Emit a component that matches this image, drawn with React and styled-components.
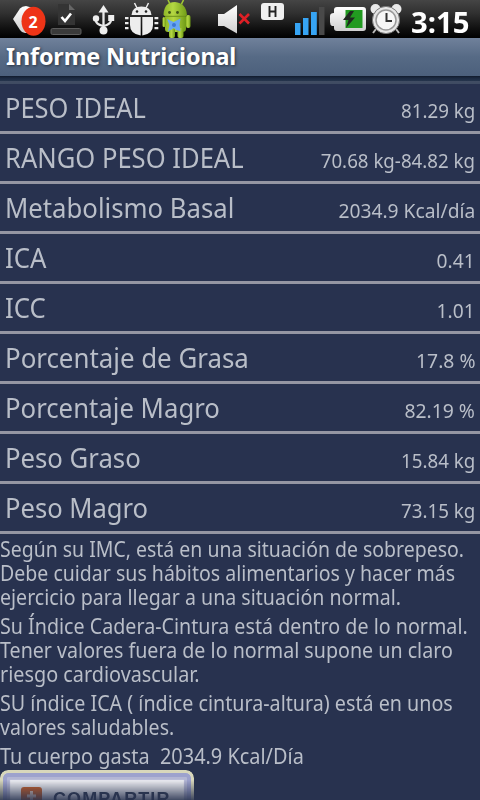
import React from 'react';
import styled, { createGlobalStyle } from 'styled-components';

const GlobalStyle = createGlobalStyle`
  * {
    box-sizing: border-box;
  }

  body {
    margin: 0;
    background: #28324f;
    font-family: 'Noto Sans', 'Open Sans', sans-serif;
    color: #b9bec8;
  }
`;

const Screen = styled.div`
  width: 480px;
  height: 800px;
  overflow: hidden;
  display: flex;
  flex-direction: column;
`;

const StatusBar = styled.header`
  height: 38px;
  flex: none;
  display: flex;
  background: linear-gradient(#454545 0, #303030 35%, #101010 75%, #000 100%);
`;

const StatusIcons = styled.svg`
  flex: none;
`;

const Clock = styled.time`
  height: 38px;
  line-height: 43px;
  font-size: 29px;
  font-weight: 700;
  transform: scaleX(1.01);
  transform-origin: left;
  color: #fff;
  white-space: nowrap;
`;

const TitleBar = styled.h1`
  height: 38px;
  flex: none;
  margin: 0;
  padding-left: 6px;
  line-height: 37px;
  font-size: 23.4px;
  font-weight: 700;
  letter-spacing: -0.15px;
  color: #fff;
  white-space: nowrap;
  text-shadow: 1px 1px 3px #26303f;
  background: linear-gradient(#70819b, #566a85 50%, #4c607c);
`;

const TitleShadow = styled.div`
  height: 8px;
  flex: none;
  background: linear-gradient(#111b2c 0, #1b2940 25%, #25344c 60%, #414d63 63%, #3f4b62 100%);
`;

const List = styled.ul`
  flex: none;
  margin: 0;
  padding: 0;
  list-style: none;
`;

const Row = styled.li`
  height: 50px;
  padding: 0 5px;
  display: flex;
  justify-content: space-between;
  border-bottom: 3px solid #9596a3;
  line-height: 47px;
  white-space: nowrap;
`;

const Label = styled.span`
  font-size: 27.5px;
  transform: scaleX(${props => props.$stretch});
  transform-origin: left;
`;

const Value = styled.span`
  padding-top: 3px;
  font-size: 20px;
  transform: scaleX(${props => props.$stretch});
  transform-origin: right;
`;

const Notes = styled.section`
  flex: none;
  padding-top: 3px;
  display: flex;
  flex-direction: column;
  gap: 5px;
`;

const Paragraph = styled.p`
  margin: 0;
  display: flex;
  flex-direction: column;
  align-items: flex-start;
  font-size: 21px;
  line-height: 24px;
  white-space: pre;
`;

const Line = styled.span`
  transform: scaleX(${props => props.$stretch});
  transform-origin: left;
`;

const ShareButton = styled.button`
  width: 194px;
  height: 48px;
  flex: none;
  margin-top: 2px;
  padding: 11px 0 0 14px;
  display: flex;
  align-items: flex-start;
  gap: 11px;
  border: 3px solid #d8d7bb;
  border-radius: 8px;
  box-shadow: inset 0 0 0 4px #9da2cd, inset 0 0 1px 7px #b3b6d4;
  background: #eeeff3;
  mask-image: linear-gradient(#000 10px, transparent 33px);
`;

const ShareIcon = styled.svg`
  flex: none;
  margin: 3px 0 0 4px;
`;

const ShareText = styled.span`
  margin-top: 4px;
  font-family: 'Liberation Sans', sans-serif;
  font-size: 18px;
  font-weight: 700;
  line-height: 22px;
  letter-spacing: 1.1px;
  color: #2c3750;
`;

const rows = [
  { label: 'PESO IDEAL', value: '81.29 kg', ls: 0.925, vs: 0.937 },
  { label: 'RANGO PESO IDEAL', value: '70.68 kg-84.82 kg', ls: 0.93, vs: 0.935 },
  { label: 'Metabolismo Basal', value: '2034.9 Kcal/día', ls: 0.935, vs: 0.962 },
  { label: 'ICA', value: '0.41', ls: 0.935, vs: 0.96 },
  { label: 'ICC', value: '1.01', ls: 0.935, vs: 0.96 },
  { label: 'Porcentaje de Grasa', value: '17.8 %', ls: 0.94, vs: 0.967 },
  { label: 'Porcentaje Magro', value: '82.19 %', ls: 0.936, vs: 0.967 },
  { label: 'Peso Graso', value: '15.84 kg', ls: 0.935, vs: 0.937 },
  { label: 'Peso Magro', value: '73.15 kg', ls: 0.93, vs: 0.937 },
];

const notes = [
  [
    ['Según su IMC, está en una situación de sobrepeso.', 0.927],
    ['Debe cuidar sus hábitos alimentarios y hacer más', 0.93],
    ['ejercicio para llegar a una situación normal.', 0.933],
  ],
  [
    ['Su Índice Cadera-Cintura está dentro de lo normal.', 0.937],
    ['Tener valores fuera de lo normal supone un claro', 0.936],
    ['riesgo cardiovascular.', 0.944],
  ],
  [
    ['SU índice ICA ( índice cintura-altura) está en unos', 0.938],
    ['valores saludables.', 0.932],
  ],
  [['Tu cuerpo gasta  2034.9 Kcal/Día', 0.948]],
];

const Icons = () => (
  <StatusIcons width="411" height="38" viewBox="0 0 411 38">
    <defs>
      <linearGradient id="silver" x1="0" y1="0" x2="0" y2="1">
        <stop offset="0" stopColor="#fff" />
        <stop offset="1" stopColor="#cfcfcf" />
      </linearGradient>
      <linearGradient id="droid" x1="0" y1="0" x2="1" y2="0">
        <stop offset="0" stopColor="#8fb827" />
        <stop offset="0.4" stopColor="#b4d743" />
        <stop offset="1" stopColor="#709c16" />
      </linearGradient>
    </defs>

    {/* tag with notification count */}
    <path d="M13 19 L20 8.500 Q22 6 26 6 L33 8 V33 L25 33 Q22 33 20 30Z" fill="url(#silver)" />
    <ellipse cx="33.5" cy="21.3" rx="12" ry="14.5" fill="#ee3417" />
    <text x="33" y="27.500" fontSize="16" fontWeight="700" textAnchor="middle" fill="#fff">2</text>

    {/* finished download */}
    <path d="M58 4 H69 V10 H75 V25 H58Z" fill="#343434" />
    <path d="M69 4 L75 10 H69Z" fill="#666" />
    <path d="M61.5 17 L65 21 L71 13.5" fill="none" stroke="#fff" strokeWidth="2.6" />
    <rect x="51" y="28.5" width="30" height="6" rx="1.5" fill="#3a3a3a" stroke="#5c5c5c" />

    {/* usb */}
    <path d="M103.5 9 V30 M96 18 V21 Q96 24 103 26 M111 18 V20 Q111 24 104 26" fill="none" stroke="#e9e9e9" strokeWidth="2.3" />
    <g fill="#eee">
      <path d="M103.5 5 L108.5 12.500 H98.5Z" />
      <circle cx="96" cy="18.500" r="3.2" />
      <rect x="108.2" y="15" width="6" height="6" />
      <circle cx="103.5" cy="30.5" r="4" />
    </g>

    {/* usb debugging bug */}
    <g fill="#ededed">
      <path d="M131.500 15 Q132 6.500 141.500 6.500 Q151 6.500 151.500 15Z" />
      <path d="M130 17 H140.700 V35.500 Q130 34 130 25Z M142.300 17 H153 V25 Q153 34 142.300 35.500Z" />
      <path d="M125 17 h3.500 v2.300 h-3.500z M125 22 h3.500 v2.300 h-3.500z M125 27 h3.500 v2.300 h-3.500z M154.500 17 h3.800 v2.300 h-3.800z M154.500 22 h3.800 v2.300 h-3.800z M154.500 27 h3.800 v2.300 h-3.800z" />
    </g>
    <path d="M134.500 3 L137 8 M148.500 3 L146 8" stroke="#ededed" strokeWidth="1.5" />
    <circle cx="137" cy="11.500" r="1.3" fill="#222" />
    <circle cx="146" cy="11.500" r="1.3" fill="#222" />

    {/* android with a bow */}
    <g fill="url(#droid)">
      <path d="M163.500 15 Q164 2 175 2 Q186 3 187 15 L185 17 H166Z" />
      <path d="M165 17 H186 V29 Q186 32 182 32 H168 Q165 32 165 29Z" />
      <rect x="186" y="15" width="4.500" height="13" rx="2" />
      <rect x="162.500" y="17" width="3" height="10" rx="1.500" />
      <rect x="169" y="28" width="6" height="10" rx="2" />
      <rect x="177.500" y="28" width="6" height="10" rx="2" />
    </g>
    <path d="M165 16.300 H186" stroke="#6d9219" strokeWidth="1" />
    <path d="M168 0 L170 4 M183.500 0 L181.500 4" stroke="#a2c936" strokeWidth="1.6" />
    <circle cx="169.500" cy="12.500" r="1.4" fill="#3d5415" />
    <circle cx="177.500" cy="12.500" r="1.4" fill="#3d5415" />
    <path d="M167 19 L173.500 22 L180.500 18.500 L179.500 25 L180.500 31 L176 30 L174 28 L168 31.500 L169.500 25Z" fill="#68a6f3" />
    <circle cx="174" cy="25" r="2" fill="#3d78d2" />

    {/* muted speaker */}
    <path d="M218 14 H224 L237 5 V33.500 L224 26 H218Z" fill="url(#silver)" />
    <path d="M239.500 14 L249 23.500 M249 14 L239.500 23.500" stroke="#df1f25" strokeWidth="2.6" />

    {/* HSDPA and signal */}
    <rect x="261" y="3" width="23" height="17" rx="3" fill="#f0f0f0" />
    <path d="M269.500 6 V17 M275.500 6 V17 M269.500 11.500 H275.500" stroke="#222" strokeWidth="1.9" />
    <g fill="#36a4f4">
      <rect x="295" y="23" width="5.5" height="12" />
      <rect x="303" y="18" width="5.5" height="17" />
      <rect x="311" y="12" width="5.8" height="23" />
    </g>
    <rect x="319" y="7" width="5.5" height="28" fill="#494949" />

    {/* charging battery */}
    <path d="M337 7 H363 Q366 7 366 10 V28 Q366 31 363 31 H337 Q334 31 334 28 V26 H332 Q330 25 330 22 V16 Q330 13 334 13 V10 Q334 7 337 7Z" fill="url(#silver)" />
    <rect x="345.5" y="10" width="17" height="18" fill="#229a20" />
    <path d="M350 11 L343 20 H348.500 L346 28 L355 17.500 H350 L354 11Z" fill="#202820" />

    {/* alarm */}
    <circle cx="375.5" cy="9" r="5" fill="#e9e9e9" />
    <circle cx="396.5" cy="9" r="5" fill="#e9e9e9" />
    <path d="M376 29 L373 33 M396 29 L399 33" stroke="#bbb" strokeWidth="2" />
    <circle cx="386" cy="20" r="13.6" fill="#e5e5e5" stroke="#777" strokeWidth="1" />
    <circle cx="386" cy="20" r="10" fill="#f7f7f7" stroke="#999" strokeWidth="1.5" />
    <path d="M386.500 13 V21 H392" fill="none" stroke="#333" strokeWidth="2" />
  </StatusIcons>
);

const App = () => (
  <>
    <GlobalStyle />
    <Screen>
      <StatusBar>
        <Icons />
        <Clock>3:15</Clock>
      </StatusBar>
      <TitleBar>Informe Nutricional</TitleBar>
      <TitleShadow />
      <List>
        {rows.map(row => (
          <Row key={row.label}>
            <Label $stretch={row.ls}>{row.label}</Label>
            <Value $stretch={row.vs}>{row.value}</Value>
          </Row>
        ))}
      </List>
      <Notes>
        {notes.map((lines, i) => (
          <Paragraph key={i}>
            {lines.map(([text, stretch]) => (
              <Line key={text} $stretch={stretch}>{text}</Line>
            ))}
          </Paragraph>
        ))}
      </Notes>
      <ShareButton>
        <ShareIcon width="21" height="20" viewBox="0 0 21 20">
          <rect width="21" height="20" rx="3" fill="#cb6026" />
          <path d="M10.500 4 V14 M6 9 H15" stroke="#efd3c2" strokeWidth="3" />
        </ShareIcon>
        <ShareText>COMPARTIR</ShareText>
      </ShareButton>
    </Screen>
  </>
);

export default App;
